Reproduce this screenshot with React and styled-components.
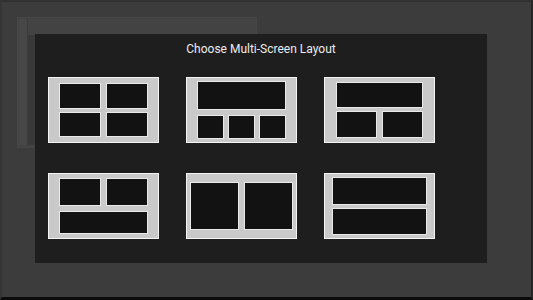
import styled, { createGlobalStyle } from "styled-components";

const GlobalStyle = createGlobalStyle`
  html, body {
    margin: 0;
    padding: 0;
    background: #3d3d3d;
    font-family: Roboto, "Noto Sans", sans-serif;
  }
`;

/* ---------------- Backdrop ---------------- */
const Screen = styled.div`
  position: relative;
  width: 533px;
  height: 300px;
  box-sizing: border-box;
  background: #3c3c3c;
  border-top: 2px solid #313131;
  border-bottom: 3px solid #0b0b0b;
  border-right: 2px solid #262626;
  border-left: 2px solid #353535;
  padding: 15px 0 0 15px;
  overflow: hidden;
`;

const GhostWindow = styled.div`
  width: 240px;
  height: 131px;
  box-sizing: border-box;
  background: #434343;
  border: 1px solid #484545;
  display: flex;
  padding: 1px 0 2px 1px;
`;

const GhostBar = styled.div`
  width: 8px;
  background: #474747;
  border-right: 1px solid #3b3b3b;
`;

const GhostBody = styled.div`
  flex: 1;
  background: #393939;
  margin-top: 16px;
`;

/* ---------------- Dialog ---------------- */
const Dialog = styled.div`
  position: absolute;
  left: 33px;
  top: 32px;
  width: 452px;
  height: 229px;
  box-sizing: border-box;
  background: #1e1e1e;
  display: flex;
  flex-direction: column;
  padding: 7px 0 0 13px;
`;

const Title = styled.h2`
  margin: 0 0 19px -13px;
  font-size: 12px;
  font-weight: 400;
  line-height: 17px;
  color: #ececec;
  text-align: center;
`;

const Grid = styled.div`
  display: grid;
  grid-template-columns: repeat(3, 111px);
  grid-auto-rows: 66px;
  column-gap: 27px;
  row-gap: 30px;
`;

/* ---------------- Layout cards ---------------- */
const Card = styled.button`
  box-sizing: border-box;
  width: 111px;
  height: 66px;
  margin: 0;
  background: #c9c9c9;
  border: 1px solid #f4f4f4;
  cursor: pointer;
  display: grid;
  grid-template-columns: ${(p) => p.$cols};
  grid-template-rows: ${(p) => p.$rows};
  gap: ${(p) => p.$gap};
  padding: ${(p) => p.$pad};
`;

const Pane = styled.div`
  background: #121212;
  border: 1px solid #e9e9e9;
  grid-column: ${(p) => (p.$wide ? "1 / -1" : "auto")};
`;

const layouts = [
  { pad: "5px 10px", cols: "1fr 1fr", rows: "1fr 1fr", gap: "3px 5px", panes: [0, 0, 0, 0] },
  { pad: "3px 10px", cols: "repeat(3, 1fr)", rows: "29px 1fr", gap: "5px 4px", panes: [1, 0, 0, 0] },
  { pad: "4px 11px", cols: "1fr 1fr", rows: "26px 1fr", gap: "3px 5px", panes: [1, 0, 0] },
  { pad: "4px 10px", cols: "1fr 1fr", rows: "28px 1fr", gap: "5px 5px", panes: [0, 0, 1] },
  { pad: "8px 3px", cols: "1fr 1fr", rows: "1fr", gap: "0 5px", panes: [0, 0] },
  { pad: "3px 7px", cols: "1fr", rows: "1fr 1fr", gap: "3px", panes: [0, 0] },
];

export default function App() {
  return (
    <>
      <GlobalStyle />
      <Screen>
        <GhostWindow>
          <GhostBar />
          <GhostBody />
        </GhostWindow>
        <Dialog>
          <Title>Choose Multi-Screen Layout</Title>
          <Grid>
            {layouts.map((l, i) => (
              <Card key={i} $pad={l.pad} $cols={l.cols} $rows={l.rows} $gap={l.gap}>
                {l.panes.map((w, j) => (
                  <Pane key={j} $wide={!!w} />
                ))}
              </Card>
            ))}
          </Grid>
        </Dialog>
      </Screen>
    </>
  );
}
